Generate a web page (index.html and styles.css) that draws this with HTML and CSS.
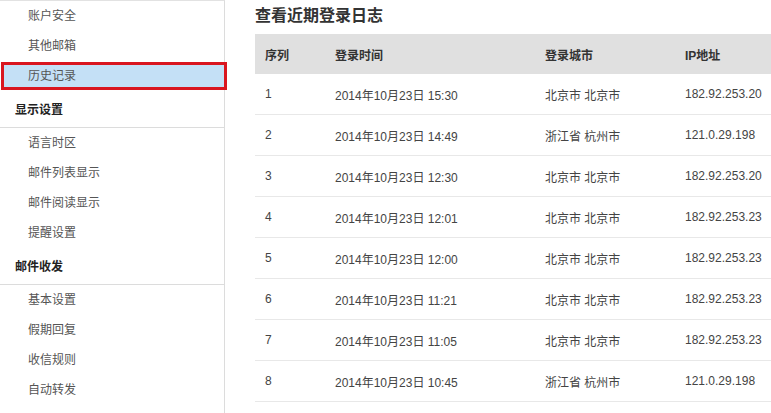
FILE: index.html
```html
<!DOCTYPE html>
<html lang="zh-CN">
<head>
<meta charset="utf-8">
<title>查看近期登录日志</title>
<link rel="stylesheet" href="styles.css">
</head>
<body>
<div class="page">
  <aside class="sidebar">
    <ul class="items">
      <li class="item"><span>账户安全</span></li>
      <li class="item"><span>其他邮箱</span></li>
      <li class="item selected"><span>历史记录</span></li>
    </ul>
    <div class="group"><span>显示设置</span></div>
    <ul class="items">
      <li class="item"><span>语言时区</span></li>
      <li class="item"><span>邮件列表显示</span></li>
      <li class="item"><span>邮件阅读显示</span></li>
      <li class="item"><span>提醒设置</span></li>
    </ul>
    <div class="group"><span>邮件收发</span></div>
    <ul class="items">
      <li class="item"><span>基本设置</span></li>
      <li class="item"><span>假期回复</span></li>
      <li class="item"><span>收信规则</span></li>
      <li class="item"><span>自动转发</span></li>
    </ul>
  </aside>
  <main class="main">
    <h2 class="title">查看近期登录日志</h2>
    <table class="log">
      <colgroup>
        <col class="c1"><col class="c2"><col class="c3"><col class="c4">
      </colgroup>
      <thead>
        <tr><th>序列</th><th>登录时间</th><th>登录城市</th><th>IP地址</th></tr>
      </thead>
      <tbody>
        <tr><td>1</td><td>2014年10月23日 15:30</td><td>北京市 北京市</td><td>182.92.253.20</td></tr>
        <tr><td>2</td><td>2014年10月23日 14:49</td><td>浙江省 杭州市</td><td>121.0.29.198</td></tr>
        <tr><td>3</td><td>2014年10月23日 12:30</td><td>北京市 北京市</td><td>182.92.253.20</td></tr>
        <tr><td>4</td><td>2014年10月23日 12:01</td><td>北京市 北京市</td><td>182.92.253.23</td></tr>
        <tr><td>5</td><td>2014年10月23日 12:00</td><td>北京市 北京市</td><td>182.92.253.23</td></tr>
        <tr><td>6</td><td>2014年10月23日 11:21</td><td>北京市 北京市</td><td>182.92.253.23</td></tr>
        <tr><td>7</td><td>2014年10月23日 11:05</td><td>北京市 北京市</td><td>182.92.253.23</td></tr>
        <tr><td>8</td><td>2014年10月23日 10:45</td><td>浙江省 杭州市</td><td>121.0.29.198</td></tr>
      </tbody>
    </table>
  </main>
</div>
</body>
</html>
```
FILE: styles.css
```css
html, body {
  margin: 0;
  padding: 0;
  background: #fff;
}
body {
  font-family: "Liberation Sans", "Noto Sans CJK SC", sans-serif;
  font-size: 12px;
  color: #333;
  overflow: hidden;
}
.page {
  display: flex;
  width: 771px;
  height: 413px;
}
.sidebar {
  width: 224px;
  flex: none;
  border-right: 1px solid #dcdcdc;
  border-top: 1px solid #e2e2e2;
}
.items {
  list-style: none;
  margin: 0;
  padding: 0;
}
.item {
  height: 30px;
  line-height: 31px;
  padding-left: 28px;
  color: #555;
  position: relative;
}
.item span,
.group span {
  position: relative;
}
.item.selected::before {
  content: "";
  position: absolute;
  left: 1px;
  top: 1px;
  right: -3px;
  bottom: 1px;
  background: #c4e0f6;
  border: 3px solid #d9161f;
}
.group {
  height: 36px;
  line-height: 38px;
  padding-left: 15px;
  font-weight: bold;
  color: #222;
  border-bottom: 1px solid #dcdcdc;
}
.main {
  flex: 1;
  padding-left: 30px;
  min-width: 0;
}
.title {
  margin: 0;
  height: 34px;
  line-height: 31px;
  font-size: 16px;
  font-weight: bold;
  color: #333;
}
.log {
  width: 516px;
  border-collapse: collapse;
  table-layout: fixed;
}
.c1 { width: 70px; }
.c2 { width: 210px; }
.c3 { width: 140px; }
.c4 { width: 96px; }
.log th {
  background: #e0e0e0;
  height: 40px;
  padding: 0 0 0 10px;
  text-align: left;
  font-weight: bold;
  color: #333;
}
.log td {
  height: 40px;
  padding: 0 0 0 10px;
  border-bottom: 1px solid #e8e8e8;
  color: #444;
  white-space: nowrap;
}
```
